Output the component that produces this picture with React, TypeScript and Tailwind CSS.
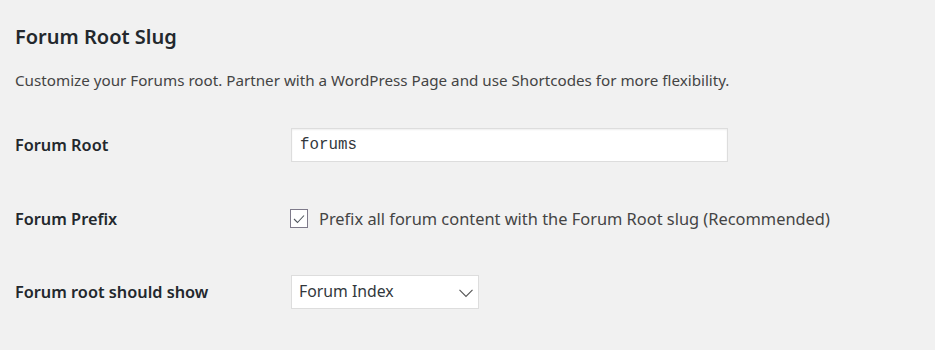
export default function App() {
  return (
    <div className="min-h-[350px] w-[935px] bg-[#f1f1f1] text-[#23282d] px-[15px] pt-[23px]" style={{ fontFamily: '"Noto Sans", "Open Sans", sans-serif' }}>
      <h2 className="text-[20px] font-semibold leading-[28px] text-[#23282d]">Forum Root Slug</h2>
      <p className="mt-[18px] text-[15.2px] leading-[22px] text-[#444]">
        Customize your Forums root. Partner with a WordPress Page and use Shortcodes for more flexibility.
      </p>

      <div className="mt-[37px] flex flex-col">
        <div className="flex items-center h-[34px]">
          <label className="w-[276px] text-[16.3px] font-semibold">Forum Root</label>
          <input
            defaultValue="forums"
            className="w-[437px] h-[34px] bg-white border border-[#ddd] shadow-[inset_0_1px_2px_rgba(0,0,0,0.07)] px-[8px] text-[15.8px] text-[#32373c] outline-none"
            style={{ fontFamily: '"Liberation Mono", "DejaVu Sans Mono", monospace' }}
          />
        </div>

        <div className="flex items-center h-[32px] mt-[41px]">
          <label className="w-[275px] text-[16.3px] font-semibold">Forum Prefix</label>
          <label className="flex items-center gap-[11px] text-[16.4px] text-[#444]">
            <span className="w-[18px] h-[19px] border border-[#7e7a8a] bg-white flex items-center justify-center">
              <svg width="14" height="12" viewBox="0 0 14 12" fill="none">
                <path d="M2 6 L5.5 9.5 L12 2.5" stroke="#50575e" strokeWidth="1.1" />
              </svg>
            </span>
            Prefix all forum content with the Forum Root slug (Recommended)
          </label>
        </div>

        <div className="flex items-center h-[34px] mt-[40px]">
          <label className="w-[276px] text-[16.3px] font-semibold">Forum root should show</label>
          <div className="relative w-[188px] h-[34px] bg-white border border-[#ddd] flex items-center px-[7px] text-[15.8px] text-[#32373c]">
            Forum Index
            <svg className="absolute right-[5px] top-[13px]" width="14" height="9" viewBox="0 0 14 9" fill="none">
              <path d="M0.5 0.8 L7 7.5 L13.5 0.8" stroke="#555" strokeWidth="1.1" />
            </svg>
          </div>
        </div>
      </div>
    </div>
  );
}
